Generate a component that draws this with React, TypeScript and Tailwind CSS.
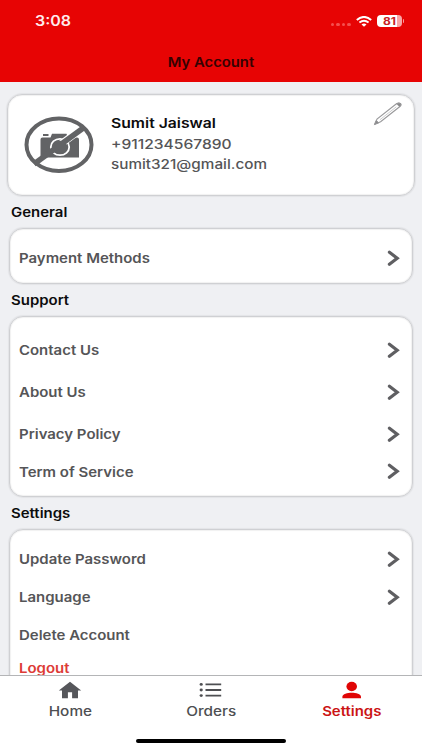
import React from "react";
import clsx from "clsx";

type TextProps = {
  className?: string;
  children: React.ReactNode;
};

// Wide label type used throughout the app
function WideText({ className, children }: TextProps) {
  return (
    <span
      className={clsx(
        "inline-block whitespace-nowrap text-[13px] leading-5",
        className
      )}
    >
      {children}
    </span>
  );
}

function Chevron() {
  return (
    <svg width="13" height="17" viewBox="0 0 13 17" fill="none">
      <path
        d="M2.4 2.2 10.2 8.2 2.4 14.2"
        stroke="#5f5f62"
        strokeWidth="3.2"
        strokeLinecap="round"
      />
    </svg>
  );
}

function NoPhotoIcon() {
  return (
    <svg width="70" height="58" viewBox="0 0 70 58" fill="none">
      <path
        d="M16.5 23.5q0-2 2-2h8l1.5-3.7h14.5l1.5 3.7H53q2 0 2 2V41.5H16.5z"
        fill="#626365"
      />
      <path d="M19 18h5.500v2H19zM48 18h5v2h-5z" fill="#626365" />
      <path d="M33 31 58 12.5" stroke="#fff" strokeWidth="7.2" />
      <ellipse cx="36" cy="31" rx="9.2" ry="8.2" stroke="#fff" strokeWidth="1.8" />
      <ellipse cx="36" cy="31" rx="7" ry="6.2" fill="#626365" />
      <path d="M10 48 60 11.500" stroke="#626365" strokeWidth="5.6" />
      <ellipse cx="35" cy="28.7" rx="32.5" ry="26.3" stroke="#626365" strokeWidth="4" />
    </svg>
  );
}

function PencilIcon() {
  return (
    <svg width="30" height="25" viewBox="0 0 30 25" fill="none" stroke="#98989a">
      <path d="M1.800 23.2 4 18 22.8 3.2q2.600-1.900 4.600-.8 1.500 1.500-.8 3.400L7.600 20.800z" strokeWidth="1.1" />
      <path d="M7 18.7 23.3 5.8" strokeWidth=".5" />
      <path d="M23.6 2.8q2.7-1.4 4-.2 1.2 1.4-1 3.1z" fill="#88888a" />
      <path d="m1.6 23.4 1.5-3.9 2.7 2.3z" fill="#88888a" />
    </svg>
  );
}

function StatusBar() {
  return (
    <div className="flex h-[42px] items-center justify-between pl-[35px] pr-[18px]">
      <WideText className="origin-left scale-x-[1.14] text-[14px] font-semibold text-[#ffecec]">
        3:08
      </WideText>
      <div className="flex items-center">
        <div className="mr-[5px] mt-[6px] flex gap-[2px]">
          {[0, 1, 2, 3].map((dot) => (
            <span key={dot} className="h-[3px] w-[3.4px] rounded-full bg-[#f4504f]" />
          ))}
        </div>
        <svg width="16" height="11" viewBox="0 0 16 11" fill="none" stroke="#fff" className="mr-[5px]">
          <path d="M.8 3.9Q8-2 15.2 3.9" strokeWidth="2" />
          <path d="M3.4 6.5q4.600-3.600 9.200 0" strokeWidth="1.9" />
          <path d="m8 10.8 2.5-2.3q-2.5-1.8-5 0z" fill="#fff" stroke="none" />
        </svg>
        <div className="flex h-3 w-[25px] items-center justify-center rounded-[4px] bg-gradient-to-r from-white from-80% to-[#f9a5a5] to-80%">
          <span className="scale-x-[1.2] text-[10px] font-bold leading-3 text-[#c8201f]">
            81
          </span>
        </div>
        <span className="ml-px h-1 w-[1.5px] rounded-r bg-[#f79b9b]" />
      </div>
    </div>
  );
}

type RowProps = {
  label: string;
  className: string;
  arrow?: boolean;
  danger?: boolean;
};

function MenuRow({ label, className, arrow = true, danger }: RowProps) {
  return (
    <div className={clsx("flex items-center justify-between", className)}>
      <WideText
        className={clsx(
          "origin-left scale-x-[1.15] font-semibold",
          danger ? "text-[#dd3b36]" : "text-[#555557]"
        )}
      >
        {label}
      </WideText>
      {arrow && <Chevron />}
    </div>
  );
}

const cardStyle =
  "border border-[#cfd0d3] bg-white shadow-[0_0_1px_1px_rgba(0,0,0,0.05),inset_0_0_1px_1px_rgba(0,0,0,0.06)]";

const menuCardStyle = clsx("mx-[9px] rounded-[14px] pl-[9px] pr-3", cardStyle);

function SectionTitle({ children }: TextProps) {
  return (
    <h2 className="flex h-8 items-center pl-[11px]">
      <WideText className="origin-left scale-x-[1.15] font-semibold text-[#0c0c0d]">
        {children}
      </WideText>
    </h2>
  );
}

type TabProps = {
  label: string;
  icon: React.ReactNode;
  active?: boolean;
};

function Tab({ label, icon, active }: TabProps) {
  return (
    <div className="flex flex-1 flex-col items-center">
      <div className="flex h-[18px] items-center justify-center">{icon}</div>
      <WideText
        className={clsx(
          "mt-[2px]",
          active
            ? "scale-x-[1.15] font-semibold text-[#cb1414]"
            : "scale-x-[1.18] font-medium text-[#4e4f52]"
        )}
      >
        {label}
      </WideText>
    </div>
  );
}

function App() {
  return (
    <div className="flex h-[750px] w-[422px] flex-col overflow-hidden bg-[#eff0f3] font-['Inter','Liberation_Sans',sans-serif]">
      <header className="h-[82px] shrink-0 bg-[#e70404]">
        <StatusBar />
        <h1 className="flex h-[39px] items-center justify-center">
          <WideText className="scale-x-[1.14] font-semibold text-[#350202]">
            My Account
          </WideText>
        </h1>
      </header>

      <main className="min-h-0 flex-1 overflow-hidden pt-3">
        <section
          className={clsx(
            "mx-[7px] flex h-[102px] items-start rounded-[15px] pl-4 pr-[11px]",
            cardStyle
          )}
        >
          <div className="mt-[21px]">
            <NoPhotoIcon />
          </div>
          <div className="ml-[16.5px] mt-[18px] flex flex-1 flex-col items-start">
            <WideText className="origin-left scale-x-[1.21] font-semibold text-[#0c0c0d]">
              Sumit Jaiswal
            </WideText>
            <WideText className="mt-px origin-left scale-x-[1.2] font-medium text-[#555557]">
              +911234567890
            </WideText>
            <WideText className="origin-left scale-x-[1.175] font-medium text-[#555557]">
              sumit321@gmail.com
            </WideText>
          </div>
          <div className="mt-[6px]">
            <PencilIcon />
          </div>
        </section>

        <SectionTitle>General</SectionTitle>
        <section className={clsx("h-14", menuCardStyle)}>
          <MenuRow label="Payment Methods" className="h-[58px]" />
        </section>

        <SectionTitle>Support</SectionTitle>
        <section className={clsx("h-[181px] pt-3", menuCardStyle)}>
          <MenuRow label="Contact Us" className="h-[42px]" />
          <MenuRow label="About Us" className="h-[42px]" />
          <MenuRow label="Privacy Policy" className="h-[42px]" />
          <MenuRow label="Term of Service" className="h-[33px]" />
        </section>

        <SectionTitle>Settings</SectionTitle>
        <section className={clsx("h-[190px] pt-[10px]", menuCardStyle)}>
          <MenuRow label="Update Password" className="h-[38px]" />
          <MenuRow label="Language" className="h-[38px]" />
          <MenuRow label="Delete Account" className="h-[37px]" arrow={false} />
          <MenuRow label="Logout" className="h-[30px]" arrow={false} danger />
        </section>
      </main>

      <nav className="flex h-[75px] shrink-0 flex-col items-center border-t border-[#b4b5b7] bg-white">
        <div className="flex w-full pt-[5px]">
          <Tab
            label="Home"
            icon={
              <svg width="24" height="18" viewBox="0 0 24 18" fill="#55565a">
                <path d="M12 .8 23.2 9.6H20v7.700h-5.900v-6.100H9.900v6.100H4V9.600H.8z" />
              </svg>
            }
          />
          <Tab
            label="Orders"
            icon={
              <svg width="24" height="16" viewBox="1 0 24 16" fill="#4e4f52">
                <path d="M7.5 1.500h15.700v1.800H7.500zM7.500 7.100h15.700v1.800H7.500zM7.500 12.700h15.700v1.800H7.500z" />
                <ellipse cx="3.2" cy="2.4" rx="1.6" ry="1.400" />
                <ellipse cx="3.2" cy="8" rx="1.6" ry="1.400" />
                <ellipse cx="3.2" cy="13.6" rx="1.6" ry="1.400" />
              </svg>
            }
          />
          <Tab
            label="Settings"
            active
            icon={
              <svg width="20" height="18" viewBox="0 0 20 18" fill="#e00505">
                <ellipse cx="9.7" cy="5.5" rx="5.3" ry="4.7" />
                <path d="M.4 17.3v-1.500c0-2.900 5-4 9.300-4s9.300 1.100 9.300 4v1.500z" />
              </svg>
            }
          />
        </div>
        <div className="mt-[18px] h-1 w-[150px] shrink-0 rounded-full bg-black" />
      </nav>
    </div>
  );
}

export default App;
